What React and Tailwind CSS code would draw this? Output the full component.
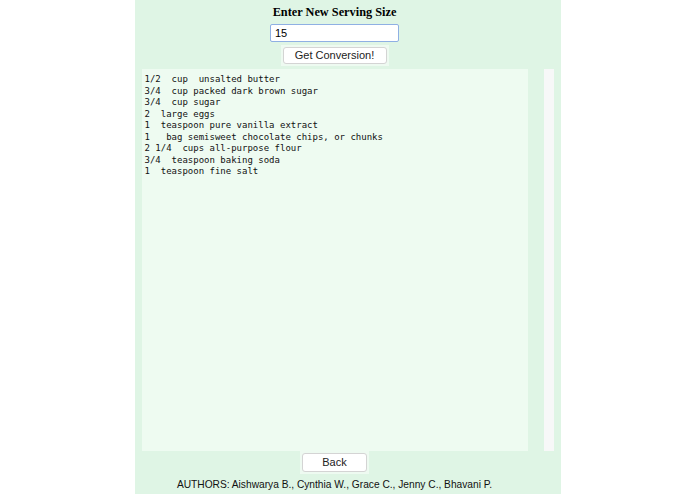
import React, { useState } from 'react';

const recipe = `1/2  cup  unsalted butter
3/4  cup packed dark brown sugar
3/4  cup sugar
2  large eggs
1  teaspoon pure vanilla extract
1   bag semisweet chocolate chips, or chunks
2 1/4  cups all-purpose flour
3/4  teaspoon baking soda
1  teaspoon fine salt`;

const sans = { fontFamily: '"Liberation Sans", Arial, sans-serif' };

export default function App() {
  const [serving, setServing] = useState("15");

  return (
    <div className="min-h-[494px] bg-white">
      <div className="mx-auto w-[426px] h-[494px] bg-[#dff5e5] flex">
        {/* main column */}
        <div className="w-[400px] flex flex-col items-center pt-[4px]">
          <h2
            className="text-[12.3px] font-bold text-black leading-[16px]"
            style={{ fontFamily: '"Liberation Serif", serif' }}
          >
            Enter New Serving Size
          </h2>

          <input
            type="text"
            value={serving}
            onChange={(e) => setServing(e.target.value)}
            className="mt-[4px] w-[129px] h-[18px] bg-white border border-[#8fb0e3] rounded-[2px] px-[4px] text-[11px] text-black outline-none"
            style={sans}
          />

          <div className="mt-[3px] p-[2px] bg-[#eefaf1] flex">
            <button
              className="w-[104px] h-[17px] bg-white border border-[#d4d4d4] rounded-[3px] text-[11px] text-[#222] leading-none"
              style={sans}
            >
              Get Conversion!
            </button>
          </div>

          <textarea
            readOnly
            value={recipe}
            className="mt-[3px] w-[386px] h-[382px] resize-none bg-[#eefbf1] border-0 outline-none px-[3px] pt-[5px] text-[9px] leading-[11.5px] text-[#111]"
            style={{ fontFamily: '"DejaVu Sans Mono", monospace' }}
          />

          <div className="p-[2px] bg-[#eefaf1] flex">
            <button
              className="w-[65px] h-[19px] bg-white border border-[#d4d4d4] rounded-[3px] text-[11px] text-[#222] leading-none"
              style={sans}
            >
              Back
            </button>
          </div>

          <p className="mt-[4px] text-[10.2px] text-[#111] leading-[13px] whitespace-nowrap" style={sans}>
            AUTHORS: Aishwarya B., Cynthia W., Grace C., Jenny C., Bhavani P.
          </p>
        </div>

        {/* side strip */}
        <div className="ml-[9px] mt-[69px] w-[10px] h-[382px] bg-[#f7f8f8]" />
      </div>
    </div>
  );
}
